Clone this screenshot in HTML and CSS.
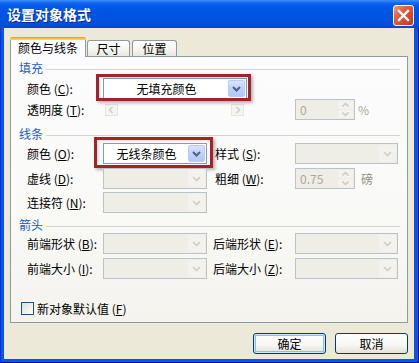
FILE: index.html
```html
<!DOCTYPE html>
<html>
<head>
<meta charset="utf-8">
<title>设置对象格式</title>
<link rel="stylesheet" href="styles.css">
</head>
<body>
<div class="window">
  <div class="titlebar">
    <span class="title">设置对象格式</span>
    <span class="close"><svg width="19" height="19" viewBox="0 0 19 19"><path d="M5 5L14 14M14 5L5 14" stroke="#fff" stroke-width="2.4" stroke-linecap="square"/></svg></span>
  </div>
  <div class="client">
    <div class="tabs">
      <div class="tab active">颜色与线条</div>
      <div class="tab t2">尺寸</div>
      <div class="tab t3">位置</div>
    </div>
    <div class="panel">
      <div class="group g1"><span>填充</span><i></i></div>
      <div class="row">
        <span class="lbl">颜色 (<u>C</u>):</span>
        <div class="combo en wide">
          <span class="val">无填充颜色</span>
          <span class="dd"><svg width="15" height="15" viewBox="0 0 15 15"><path d="M4 6l3.5 3.5L11 6" fill="none" stroke="#4D6185" stroke-width="2"/></svg></span>
          <span class="mark m1"></span>
        </div>
      </div>
      <div class="row">
        <span class="lbl">透明度 (<u>T</u>):</span>
        <div class="slider">
          <span class="sb"><svg width="11" height="10" viewBox="0 0 11 10"><path d="M6.5 2L3.5 5l3 3" fill="none" stroke="#D0CFC8" stroke-width="1.6"/></svg></span>
          <span class="sb"><svg width="11" height="10" viewBox="0 0 11 10"><path d="M4.5 2l3 3-3 3" fill="none" stroke="#D0CFC8" stroke-width="1.6"/></svg></span>
        </div>
        <div class="spin s-gap1">
          <span class="sv">0</span>
          <span class="sbtns">
            <span><svg width="9" height="6" viewBox="0 0 9 6"><path d="M1.5 4.5L4.5 1.5 7.5 4.5" fill="none" stroke="#C9C7BE" stroke-width="1.4"/></svg></span>
            <span><svg width="9" height="6" viewBox="0 0 9 6"><path d="M1.5 1.5L4.5 4.5 7.5 1.5" fill="none" stroke="#C9C7BE" stroke-width="1.4"/></svg></span>
          </span>
        </div>
        <span class="unit pct">%</span>
      </div>

      <div class="group g2"><span>线条</span><i></i></div>
      <div class="row">
        <span class="lbl">颜色 (<u>O</u>):</span>
        <div class="combo en narrow">
          <span class="val">无线条颜色</span>
          <span class="dd"><svg width="15" height="15" viewBox="0 0 15 15"><path d="M4 6l3.5 3.5L11 6" fill="none" stroke="#4D6185" stroke-width="2"/></svg></span>
          <span class="mark m2"></span>
        </div>
        <span class="lbl2">样式 (<u>S</u>):</span>
        <div class="combo dis right">
          <span class="val"></span>
          <span class="dd"><svg width="15" height="15" viewBox="0 0 15 15"><path d="M4 6l3.5 3.5L11 6" fill="none" stroke="#CFCEC6" stroke-width="1.6"/></svg></span>
        </div>
      </div>
      <div class="row r4">
        <span class="lbl">虚线 (<u>D</u>):</span>
        <div class="combo dis narrow">
          <span class="val"></span>
          <span class="dd"><svg width="15" height="15" viewBox="0 0 15 15"><path d="M4 6l3.5 3.5L11 6" fill="none" stroke="#CFCEC6" stroke-width="1.6"/></svg></span>
        </div>
        <span class="lbl2">粗细 (<u>W</u>):</span>
        <div class="spin">
          <span class="sv">0.75</span>
          <span class="sbtns">
            <span><svg width="9" height="6" viewBox="0 0 9 6"><path d="M1.5 4.5L4.5 1.5 7.5 4.5" fill="none" stroke="#C9C7BE" stroke-width="1.4"/></svg></span>
            <span><svg width="9" height="6" viewBox="0 0 9 6"><path d="M1.5 1.5L4.5 4.5 7.5 1.5" fill="none" stroke="#C9C7BE" stroke-width="1.4"/></svg></span>
          </span>
        </div>
        <span class="unit pt">磅</span>
      </div>
      <div class="row r5">
        <span class="lbl">连接符 (<u>N</u>):</span>
        <div class="combo dis narrow">
          <span class="val"></span>
          <span class="dd"><svg width="15" height="15" viewBox="0 0 15 15"><path d="M4 6l3.5 3.5L11 6" fill="none" stroke="#CFCEC6" stroke-width="1.6"/></svg></span>
        </div>
      </div>

      <div class="group g3"><span>箭头</span><i></i></div>
      <div class="row">
        <span class="lbl">前端形状 (<u>B</u>):</span>
        <div class="combo dis narrow">
          <span class="val"></span>
          <span class="dd"><svg width="15" height="15" viewBox="0 0 15 15"><path d="M4 6l3.5 3.5L11 6" fill="none" stroke="#CFCEC6" stroke-width="1.6"/></svg></span>
        </div>
        <span class="lbl2 b">后端形状 (<u>E</u>):</span>
        <div class="combo dis right">
          <span class="val"></span>
          <span class="dd"><svg width="15" height="15" viewBox="0 0 15 15"><path d="M4 6l3.5 3.5L11 6" fill="none" stroke="#CFCEC6" stroke-width="1.6"/></svg></span>
        </div>
      </div>
      <div class="row r4">
        <span class="lbl">前端大小 (<u>I</u>):</span>
        <div class="combo dis narrow">
          <span class="val"></span>
          <span class="dd"><svg width="15" height="15" viewBox="0 0 15 15"><path d="M4 6l3.5 3.5L11 6" fill="none" stroke="#CFCEC6" stroke-width="1.6"/></svg></span>
        </div>
        <span class="lbl2 b">后端大小 (<u>Z</u>):</span>
        <div class="combo dis right">
          <span class="val"></span>
          <span class="dd"><svg width="15" height="15" viewBox="0 0 15 15"><path d="M4 6l3.5 3.5L11 6" fill="none" stroke="#CFCEC6" stroke-width="1.6"/></svg></span>
        </div>
      </div>

      <div class="chk">
        <span class="box"></span>
        <span>新对象默认值 (<u>F</u>)</span>
      </div>
    </div>
    <div class="btns">
      <div class="btn def">确定</div>
      <div class="btn">取消</div>
    </div>
  </div>
</div>
</body>
</html>
```

FILE: styles.css
```css
* { box-sizing: border-box; }
html, body { margin: 0; padding: 0; }
body {
  font-family: "Noto Sans CJK SC", "Noto Sans", sans-serif;
  font-size: 12px;
  color: #000;
  background: #fff;
}
u { text-decoration: underline; text-underline-offset: 1px; }

.window {
  width: 419px;
  height: 363px;
  display: flex;
  flex-direction: column;
  background: #0A55E3;
  box-shadow: inset 1px 0 #0831D9, inset -1px 0 #00138C, inset 0 -1px #00138C;
}

.titlebar {
  height: 28px;
  flex: none;
  display: flex;
  align-items: center;
  justify-content: space-between;
  padding: 0 5px 0 7px;
  background: linear-gradient(#3C8DFA 0, #1168EE 3px, #0058E8 7px, #0054E3 50%, #0051DD 85%, #0047CF 100%);
}
.title {
  color: #fff;
  font-weight: bold;
  font-size: 14px;
  line-height: 16px;
  text-shadow: 1px 1px #0F2A8A;
}
.close {
  width: 21px;
  height: 21px;
  margin-top: 2px;
  border: 1px solid #fff;
  border-radius: 3px;
  background: linear-gradient(135deg, #EE9A80 0%, #E06140 35%, #D1482A 70%, #C23C20 100%);
  display: flex;
  align-items: center;
  justify-content: center;
}

.client {
  flex: 1;
  margin: 0 5px 4px 4px;
  background: #ECE9D8;
  padding: 9px 6px 5px 6px;
  display: flex;
  flex-direction: column;
}

.tabs {
  height: 19px;
  display: flex;
  align-items: flex-end;
  position: relative;
  z-index: 1;
}
.tab {
  height: 16px;
  border: 1px solid #919B9C;
  border-bottom: none;
  border-radius: 3px 3px 0 0;
  background: linear-gradient(#FFFFFF, #F5F4F0 60%, #E8E7E0);
  display: flex;
  align-items: center;
  justify-content: center;
  line-height: 14px;
  padding-top: 1px;
}
.tab.active {
  width: 76px;
  height: 20px;
  margin-bottom: -1px;
  background: #FCFCFE;
  position: relative;
  border-top: none;
  padding-top: 2px;
}
.tab.active::before {
  content: "";
  position: absolute;
  top: 0;
  left: -1px;
  right: -1px;
  height: 3px;
  border-radius: 3px 3px 0 0;
  background: linear-gradient(#E68B2C, #FFC73C 60%, #FFD86B);
}
.t2 { width: 43px; margin-left: 1px; }
.t3 { width: 45px; margin-left: 2px; }

.panel {
  height: 267px;
  flex: none;
  border: 1px solid #919B9C;
  background: linear-gradient(#FCFCFE, #F9F9F6 60%, #F4F3EE);
  padding: 3px 7px 0 8px;
}

.group {
  height: 16px;
  display: flex;
  align-items: center;
  color: #215DC6;
  line-height: 16px;
}
.group i {
  flex: 1;
  height: 1px;
  background: #D6D5C8;
  margin-left: 3px;
  margin-top: 2px;
}
.g1 { margin-bottom: 2px; }
.g2 { margin-top: 6px; margin-bottom: 1px; }
.g3 { margin-top: 4px; }

.row {
  height: 21px;
  display: flex;
  align-items: center;
  padding-left: 8px;
  white-space: nowrap;
}
.r4 { margin-top: 4px; }
.r5 { margin-top: 3px; }

.lbl { width: 76px; flex: none; }
.lbl2 { width: 80px; margin-left: 8px; flex: none; }
.lbl2.b { width: 82px; margin-left: 6px; }

.combo {
  position: relative;
  height: 21px;
  flex: none;
  display: flex;
  align-items: center;
  padding: 1px;
  border: 1px solid #7F9DB9;
  background: #fff;
}
.combo.wide { width: 144px; }
.combo.narrow { width: 104px; }
.combo.right { width: 103px; }
.combo .val { flex: 1; text-align: center; line-height: 17px; }
.combo .dd {
  width: 17px;
  height: 17px;
  display: flex;
  align-items: center;
  justify-content: center;
  border-radius: 2px;
}
.combo.en .dd {
  background: linear-gradient(#D9E5FD, #C0D2FB 50%, #B3C8F6);
  border: 1px solid #BACCF4;
}
.combo.dis {
  border-color: #BAC2CB;
  background: #EEEDE6;
}
.combo.dis .dd {
  background: #F3F2EE;
}

.mark {
  position: absolute;
  border: 3px solid #A3232A;
  box-shadow: 2px 2px 3px rgba(60, 40, 40, 0.35), inset 1px 1px 2px rgba(60, 40, 40, 0.15);
  pointer-events: none;
}
.m1 { left: -8px; right: -5px; top: -5px; bottom: -3px; }
.m2 { left: -10px; right: -7px; top: -7px; bottom: -5px; }

.slider {
  width: 139px;
  height: 12px;
  margin-left: 2px;
  flex: none;
  display: flex;
  justify-content: space-between;
}
.sb {
  width: 13px;
  height: 12px;
  border: 1px solid #E6E5DF;
  background: #F5F4F0;
  display: flex;
  align-items: center;
  justify-content: center;
}

.spin {
  width: 60px;
  height: 21px;
  flex: none;
  display: flex;
  align-items: center;
  padding: 1px;
  border: 1px solid #BAC2CB;
  background: #EEEDE6;
  color: #ACA899;
}
.s-gap1 { margin-left: 51px; }
.spin .sv { flex: 1; padding-left: 3px; line-height: 17px; }
.sbtns {
  width: 15px;
  height: 17px;
  display: flex;
  flex-direction: column;
  gap: 1px;
}
.sbtns span {
  flex: 1;
  background: #F3F2EE;
  border-radius: 2px;
  display: flex;
  align-items: center;
  justify-content: center;
}
.unit { flex: none; }
.pct { margin-left: 3px; color: #ACA899; }
.pt { margin-left: 6px; color: #8C8C88; }

.chk {
  height: 16px;
  margin-top: 21px;
  padding-left: 2px;
  display: flex;
  align-items: center;
}
.box {
  width: 13px;
  height: 13px;
  border: 1px solid #1C5180;
  background: linear-gradient(135deg, #DCDCD7, #FFFFFF);
  margin-right: 3px;
}

.btns {
  display: flex;
  justify-content: flex-end;
  gap: 9px;
  margin-top: 10px;
}
.btn {
  width: 73px;
  height: 21px;
  border: 1px solid #003C74;
  border-radius: 3px;
  background: linear-gradient(#FFFFFF, #F6F6F3 60%, #E3E0D5);
  display: flex;
  align-items: center;
  justify-content: center;
  line-height: 14px;
}
.btn.def {
  box-shadow: inset 0 0 0 1px #CEE7FF, inset 0 0 0 2px #98B7EC;
}
```
